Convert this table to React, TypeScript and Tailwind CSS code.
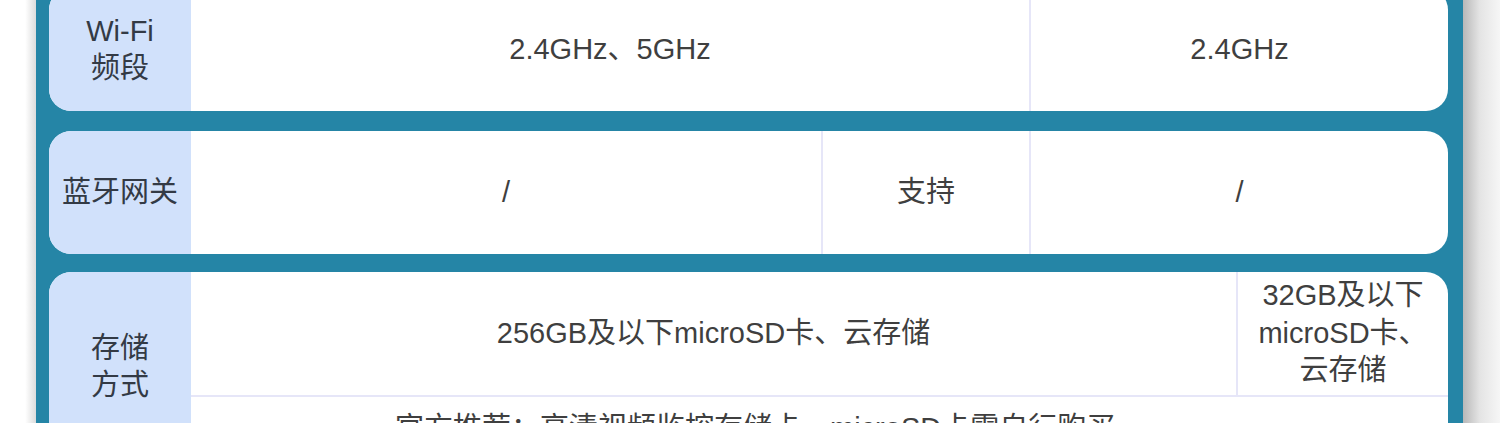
import React from "react";

const font = "font-['Liberation_Sans','Noto_Sans_CJK_SC',sans-serif]";

function Label({ children }: { children: React.ReactNode }) {
  return (
    <div className="w-[142px] shrink-0 bg-[#d1e1fb] flex items-center justify-center text-center leading-[37px] text-[#333a45]">
      {children}
    </div>
  );
}

export default function App() {
  return (
    <div className={`w-[1500px] h-[423px] overflow-hidden flex bg-white text-[29px] text-[#3f3f3f] ${font}`}>
      <div className="w-[36px] shrink-0 bg-[linear-gradient(to_right,#ffffff_70%,#dcdcdc)]" />
      <div className="w-[1427px] shrink-0 bg-[#2585a6] pl-[13px] flex flex-col">
        {/* Card 1 */}
        <div className="w-[1399px] h-[123px] -mt-[12px] shrink-0 flex rounded-[22px] overflow-hidden bg-white">
          <Label>
            <div>
              Wi-Fi
              <br />
              频段
            </div>
          </Label>
          <div className="w-[838px] flex items-center justify-center">2.4GHz、5GHz</div>
          <div className="flex-1 border-l-2 border-[#e6e6f8] flex items-center justify-center">2.4GHz</div>
        </div>

        {/* Card 2 */}
        <div className="w-[1399px] h-[123px] mt-[20px] shrink-0 flex rounded-[22px] overflow-hidden bg-white">
          <Label>蓝牙网关</Label>
          <div className="w-[630px] flex items-center justify-center">/</div>
          <div className="w-[208px] border-l-2 border-[#e6e6f8] flex items-center justify-center">支持</div>
          <div className="flex-1 border-l-2 border-[#e6e6f8] flex items-center justify-center">/</div>
        </div>

        {/* Card 3 */}
        <div className="w-[1399px] h-[190px] mt-[18px] shrink-0 flex rounded-[22px] overflow-hidden bg-white">
          <Label>
            <div>
              存储
              <br />
              方式
            </div>
          </Label>
          <div className="flex-1 flex flex-col">
            <div className="h-[123px] flex">
              <div className="w-[1045px] flex items-center justify-center">256GB及以下microSD卡、云存储</div>
              <div className="flex-1 border-l-2 border-[#e6e6f8] flex items-center justify-center text-center leading-[37.5px]">
                <div>
                  32GB及以下
                  <br />
                  microSD卡、
                  <br />
                  云存储
                </div>
              </div>
            </div>
            <div className="h-[65px] border-t-2 border-[#e6e6f8] flex items-center pl-[204px] whitespace-nowrap">
              官方推荐：高清视频监控存储卡，microSD卡需自行购买
            </div>
          </div>
        </div>
      </div>
      <div className="flex-1 bg-[linear-gradient(to_right,#b8b8b8,#e4e4e4_45%,#f6f6f6)]" />
    </div>
  );
}
